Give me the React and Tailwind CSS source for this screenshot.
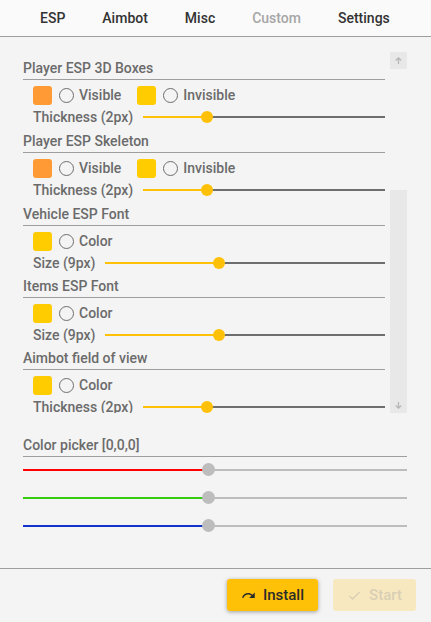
import React from 'react';

const tabs = [
  { label: 'ESP', muted: false },
  { label: 'Aimbot', muted: false },
  { label: 'Misc', muted: false },
  { label: 'Custom', muted: true },
  { label: 'Settings', muted: false },
];

const sections = [
  { title: 'Player ESP 3D Boxes', colors: [['#ff9a35', 'Visible'], ['#ffcc00', 'Invisible']], slider: 'Thickness (2px)', value: 0.265 },
  { title: 'Player ESP Skeleton', colors: [['#ff9a35', 'Visible'], ['#ffcc00', 'Invisible']], slider: 'Thickness (2px)', value: 0.265 },
  { title: 'Vehicle ESP Font', colors: [['#ffcc00', 'Color']], slider: 'Size (9px)', value: 0.405 },
  { title: 'Items ESP Font', colors: [['#ffcc00', 'Color']], slider: 'Size (9px)', value: 0.405 },
  { title: 'Aimbot field of view', colors: [['#ffcc00', 'Color']], slider: 'Thickness (2px)', value: 0.265 },
];

function ColorOption({ color, label }) {
  return (
    <div className="flex items-center">
      <span className="h-[19px] w-[19px] rounded-[3px]" style={{ backgroundColor: color }} />
      <span className="ml-[7px] h-[15px] w-[15px] rounded-full border-[1.5px] border-[#6e6e6e]" />
      <span className="ml-[5px] text-[14px] font-medium text-[#6b6b6b]">{label}</span>
    </div>
  );
}

function Slider({ value }) {
  return (
    <div className="relative flex h-[12px] flex-1 items-center">
      <div className="flex h-[2px] w-full">
        <div className="h-full bg-[#ffc107]" style={{ width: `${value * 100}%` }} />
        <div className="h-full flex-1 bg-[#6e6e6e]" />
      </div>
      <span
        className="absolute top-0 h-[12px] w-[12px] -translate-x-1/2 rounded-full bg-[#ffc107]"
        style={{ left: `${value * 100}%` }}
      />
    </div>
  );
}

function RgbSlider({ color }) {
  return (
    <div className="relative flex h-[13px] items-center">
      <div className="flex h-[2px] w-full">
        <div className="h-full w-[180px]" style={{ backgroundColor: color }} />
        <div className="h-full flex-1 bg-[#bdbdbd]" />
      </div>
      <span className="absolute left-[179px] top-0 h-[13px] w-[13px] rounded-full bg-[#bdbdbd]" />
    </div>
  );
}

function Section({ section, h }) {
  return (
    <div className={h}>
      <div className="h-[22px] border-b border-[#9e9e9e] text-[14px] font-medium leading-[21px] text-[#6b6b6b]">
        {section.title}
      </div>
      <div className="mt-[5px] flex h-[20px] items-center gap-[16px] pl-[10px]">
        {section.colors.map(([c, l]) => (
          <ColorOption key={l} color={c} label={l} />
        ))}
      </div>
      <div className="flex h-[24px] items-center pl-[10px]">
        <span className="mr-[10px] text-[14px] font-medium text-[#6b6b6b]">{section.slider}</span>
        <Slider value={section.value} />
      </div>
    </div>
  );
}

export default function App() {
  return (
    <div className="flex h-[622px] w-[431px] flex-col bg-[#f4f4f4] font-['Roboto',sans-serif]">
      <header className="flex h-[37px] items-center gap-[37px] border-b border-[#9e9e9e] bg-[#fafafa] pl-[40px]">
        {tabs.map((t) => (
          <span key={t.label} className={`text-[14px] font-medium ${t.muted ? 'text-[#a6a6a6]' : 'text-[#333]'}`}>
            {t.label}
          </span>
        ))}
      </header>

      <div className="ml-[23px] mt-[15px] flex h-[361px] w-[384px] gap-[5px]">
        <div className="w-[362px] overflow-hidden pt-[6px]">
          {sections.map((s, i) => (
            <Section key={s.title} section={s} h={i < 2 ? 'h-[73px]' : 'h-[72px]'} />
          ))}
        </div>
        <div className="flex w-[17px] flex-col justify-between">
          <div className="flex h-[17px] items-center justify-center bg-[#e8e8e8]">
            <svg width="9" height="9" viewBox="0 0 10 10" fill="none" stroke="#b5b5b5" strokeWidth="1.4">
              <path d="M5 9V2M2 5l3-3 3 3" />
            </svg>
          </div>
          <div className="flex h-[223px] items-end justify-center bg-[#e8e8e8] pb-[3px]">
            <svg width="9" height="9" viewBox="0 0 10 10" fill="none" stroke="#b5b5b5" strokeWidth="1.4">
              <path d="M5 1v7M2 5l3 3 3-3" />
            </svg>
          </div>
        </div>
      </div>

      <div className="ml-[23px] mt-[22px] w-[384px]">
        <div className="h-[22px] border-b border-[#9e9e9e] text-[14px] font-medium leading-[21px] text-[#6b6b6b]">
          Color picker [0,0,0]
        </div>
        <div className="mt-[6px] flex flex-col gap-[15px]">
          <RgbSlider color="#ff0000" />
          <RgbSlider color="#33cc11" />
          <RgbSlider color="#1133cc" />
        </div>
      </div>

      <div className="flex-1" />

      <footer className="flex h-[54px] items-start justify-end gap-[15px] border-t border-[#9e9e9e] pr-[15px] pt-[10px]">
        <button className="flex h-[32px] w-[91px] items-center justify-center gap-[7px] rounded-[3px] bg-[#ffc107] text-[15px] font-medium text-[#2b2b2b] shadow-[0_1px_4px_rgba(0,0,0,0.35)]">
          <svg width="15" height="15" viewBox="0 0 24 24" fill="#2b2b2b">
            <path d="M18.4 10.6C16.55 8.99 14.15 8 11.5 8c-4.65 0-8.58 3.03-9.96 7.22L3.9 16c1.05-3.19 4.05-5.5 7.6-5.5 1.95 0 3.73.72 5.12 1.88L13 16h9V7l-3.6 3.6z" />
          </svg>
          Install
        </button>
        <button className="flex h-[32px] w-[83px] items-center justify-center gap-[7px] rounded-[3px] bg-[#f8e8c0] text-[15px] font-medium text-[#d8cfb4]">
          <svg width="15" height="15" viewBox="0 0 24 24" fill="#d8cfb4">
            <path d="M9 16.17L4.83 12l-1.42 1.41L9 19 21 7l-1.41-1.41z" />
          </svg>
          Start
        </button>
      </footer>
    </div>
  );
}
